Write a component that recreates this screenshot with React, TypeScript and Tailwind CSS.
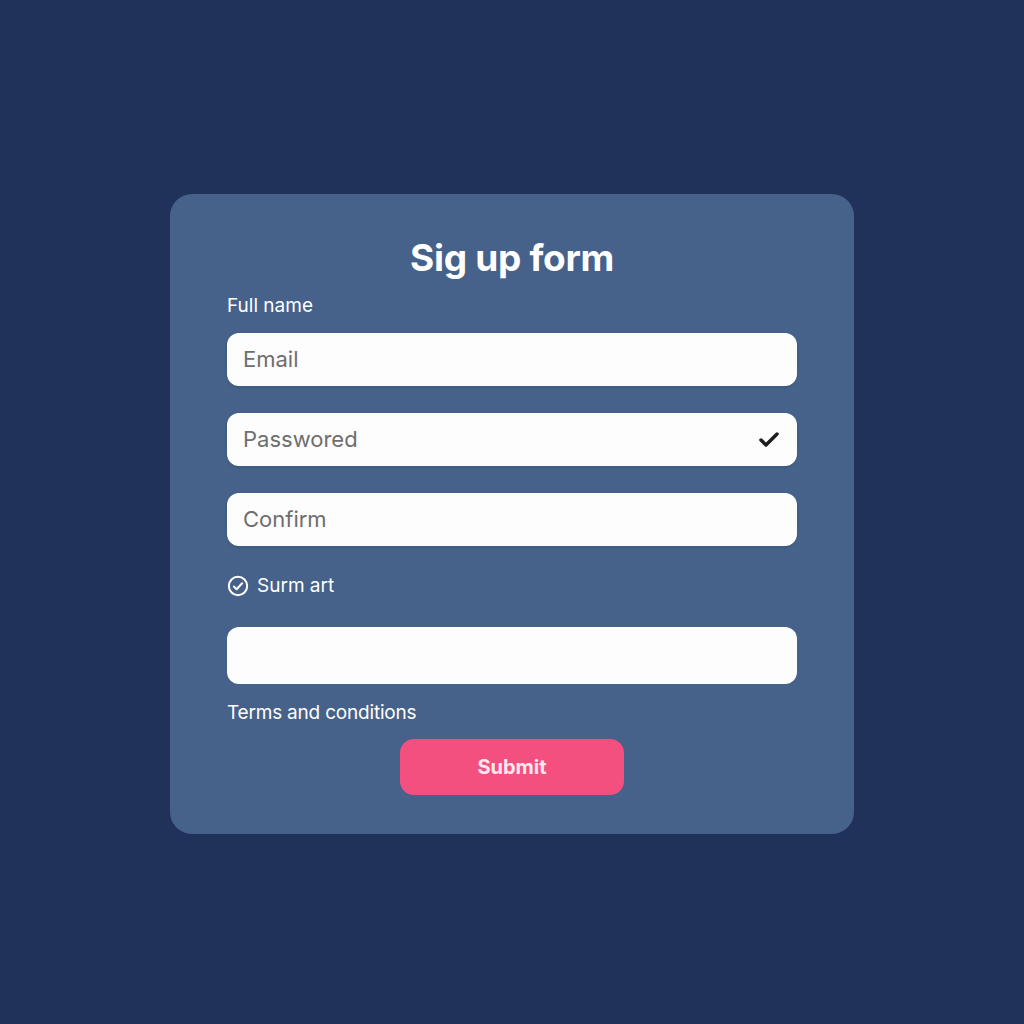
import { Check } from "lucide-react";

const Field = ({ placeholder, check }: { placeholder?: string; check?: boolean }) => (
  <div className="flex h-[53px] items-center justify-between rounded-[12px] bg-[#fdfdfd] pl-4 pr-4 shadow-sm">
    <span className="text-[22px] text-[#6e6e6e]">{placeholder}</span>
    {check && <Check className="h-6 w-6 text-[#1e1e1e]" strokeWidth={3.5} />}
  </div>
);

const App = () => {
  return (
    <div
      className="flex min-h-screen items-center justify-center bg-[#20325a] pt-1"
      style={{ fontFamily: "Inter, 'Open Sans', sans-serif" }}
    >
      <div className="h-[640px] w-[684px] rounded-[22px] bg-[#46628a] px-[57px] pt-[44px]">
        <h1 className="text-center text-[37px] font-bold leading-[40px] tracking-[-0.3px] text-white">
          Sig up form
        </h1>
        <div className="mt-[16px] text-[19px] leading-[24px] text-white">Full name</div>
        <div className="mt-[15px] flex flex-col gap-[27px]">
          <Field placeholder="Email" />
          <Field placeholder="Passwored" check />
          <Field placeholder="Confirm" />
        </div>
        <div className="mt-[28px] flex items-center gap-2 text-[19px] leading-[24px] text-white">
          <svg viewBox="0 0 24 24" className="h-[22px] w-[22px]" fill="none" stroke="currentColor" strokeWidth={2.2} strokeLinecap="round" strokeLinejoin="round">
            <circle cx="12" cy="12" r="10" />
            <path d="M7.5 12.5l3 3 6-6.5" />
          </svg>
          <span>Surm art</span>
        </div>
        <div className="mt-[29px] h-[57px] rounded-[12px] bg-[#fdfdfd]" />
        <div className="mt-[17px] text-[19px] leading-[24px] tracking-[-0.2px] text-white">Terms and conditions</div>
        <div className="mt-[14px] flex justify-center">
          <button className="h-[56px] w-[224px] rounded-[14px] bg-[#f4507f] text-[20px] font-bold text-[#fde8ee]">
            Submit
          </button>
        </div>
      </div>
    </div>
  );
};

export default App;
